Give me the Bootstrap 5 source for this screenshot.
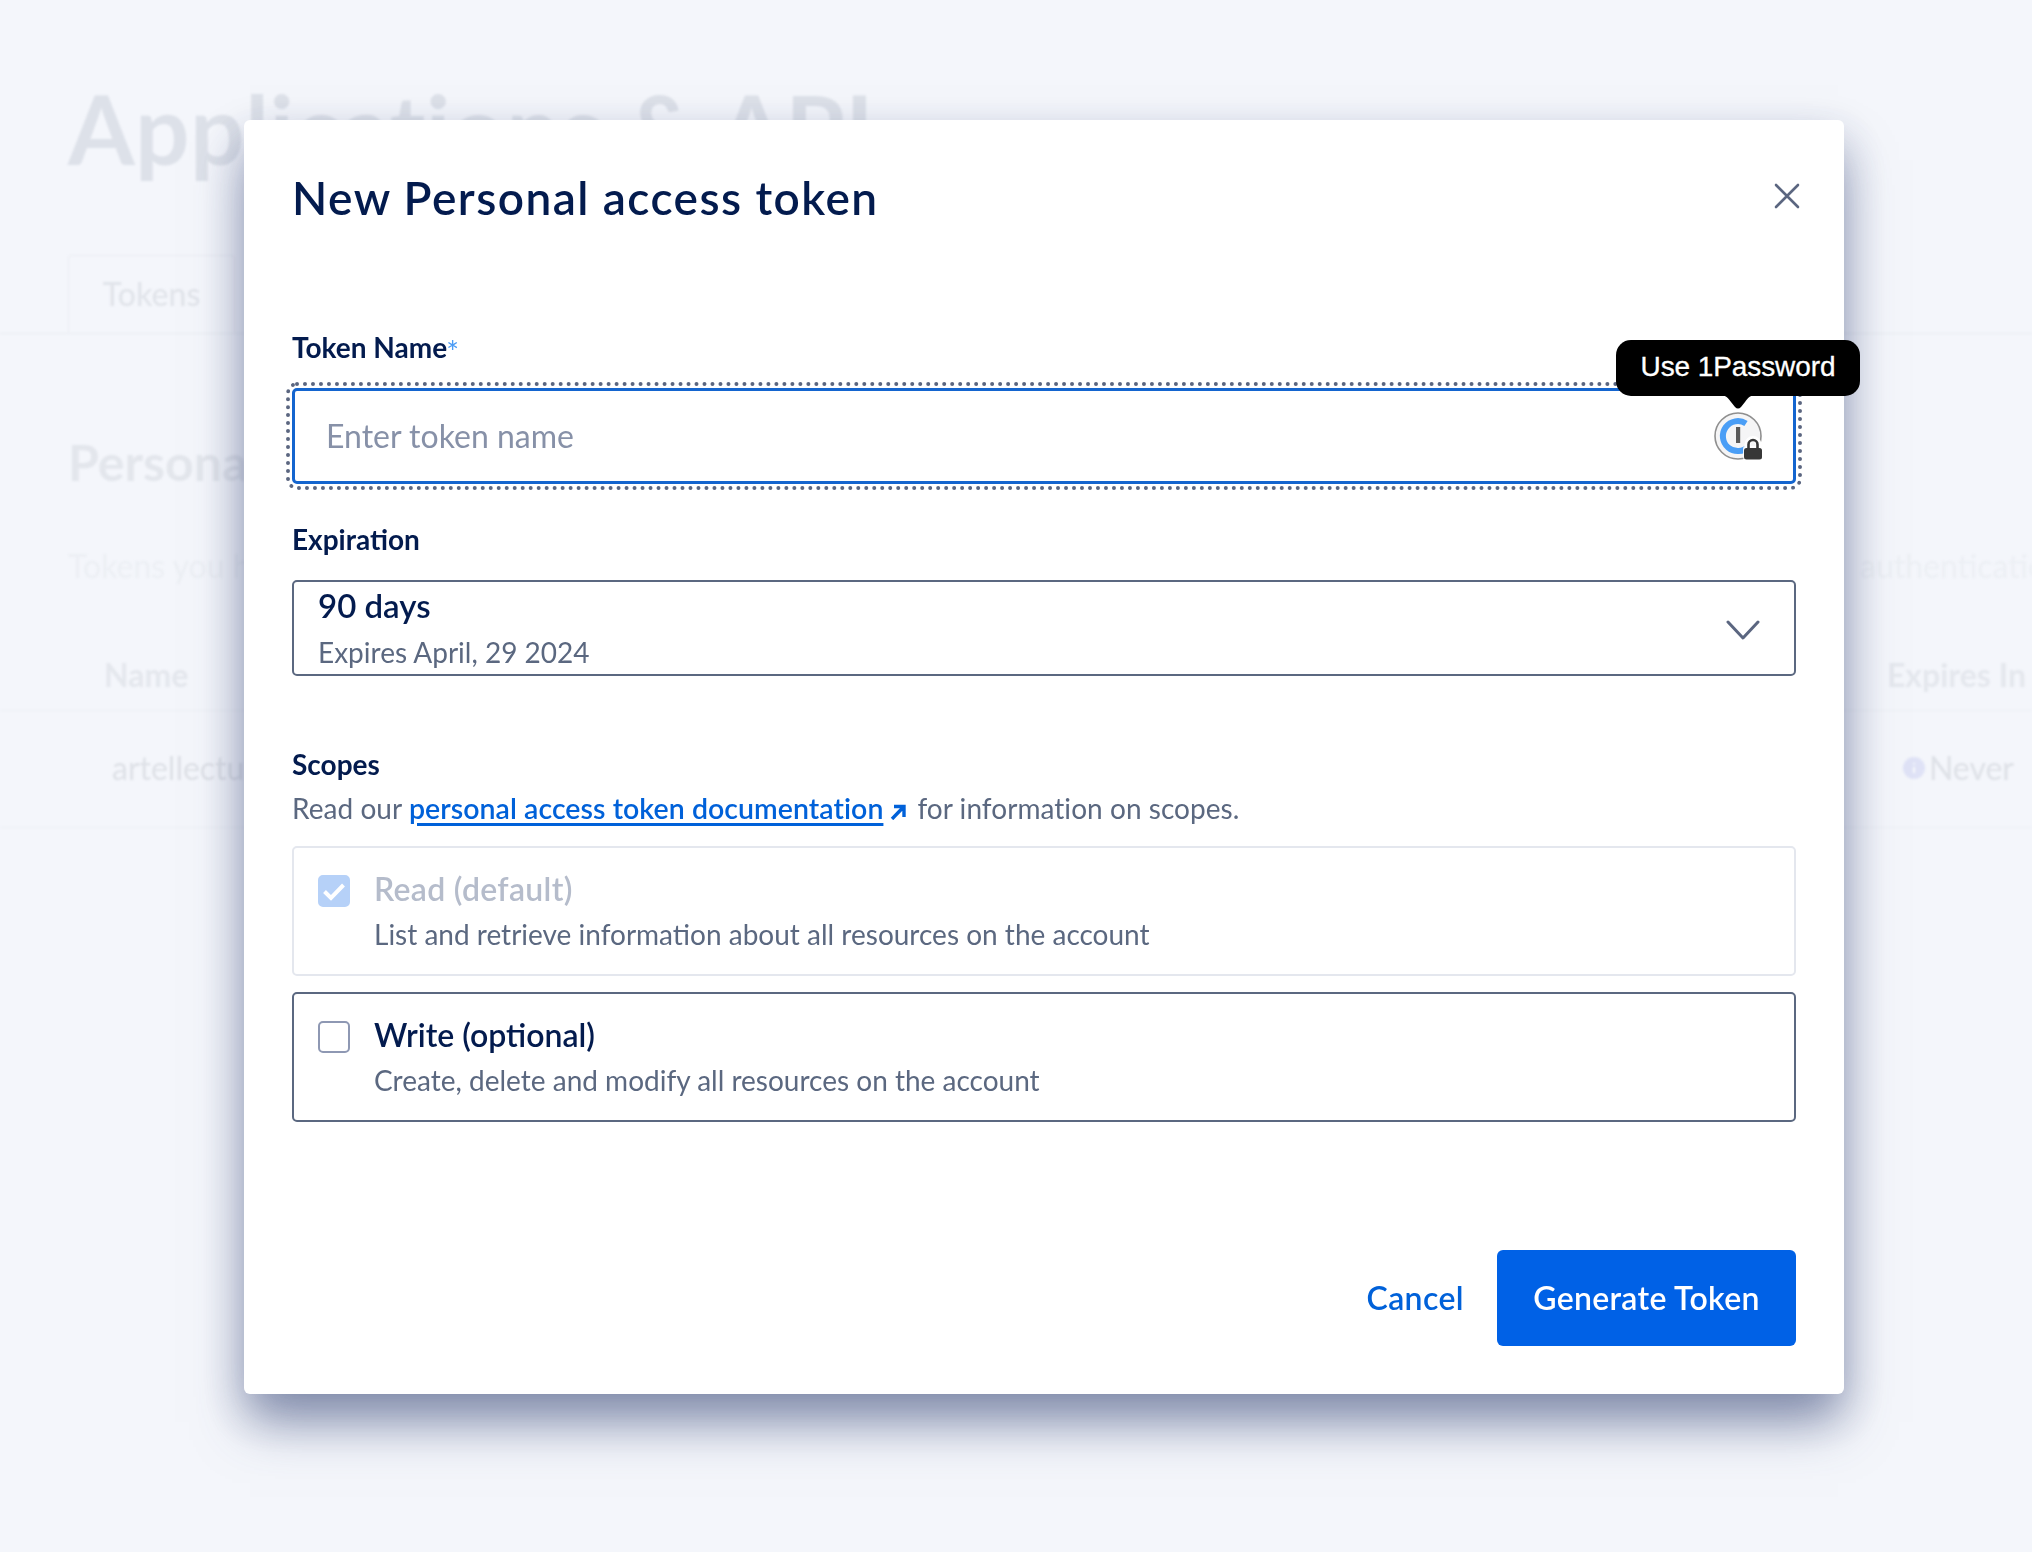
<!DOCTYPE html>
<html lang="en">
<head>
<meta charset="utf-8">
<title>New Personal access token</title>
<link rel="stylesheet" href="https://cdn.jsdelivr.net/npm/bootstrap@5.3.0/dist/css/bootstrap.min.css">
<style>
html,body{height:100%;overflow:hidden}
body{background:#f4f6fb;font-family:"Lato","Liberation Sans",sans-serif;color:#031b4e}
.page-under{height:1552px;overflow:hidden;filter:blur(1.2px);color:#dfe3ea;padding-top:78px}
.under-title{font-size:96px;font-weight:700;line-height:100px;letter-spacing:.5px;margin:0 0 77px 68px;color:#dde1e9}
.under-tabs{border-bottom:1px solid #e9ecf2;padding-left:68px;height:79px}
.under-tab{width:167px;height:79px;border:1px solid #ebedf3;border-bottom:0;border-radius:4px 4px 0 0;font-size:32px;color:#e1e4ea;font-weight:500;padding-bottom:2px}
.under-h2{font-size:50px;font-weight:700;line-height:60px;margin:98px 0 0 68px;color:#e3e6ec;white-space:nowrap}
.under-line{font-size:32px;line-height:40px;color:#eceff4;margin-top:54px;padding:0 0 0 68px;white-space:nowrap;width:2032px}
.under-line span:last-child{margin-right:-32px}
.under-head{font-size:32px;font-weight:700;color:#e4e7ed;line-height:40px;margin-top:69px;padding:0 6px 15px 104px;border-bottom:1px solid #eef0f6}
.under-row{font-size:32px;color:#dee1e7;line-height:40px;padding:37px 18px 39px 112px;border-bottom:1px solid #eef0f6}
.under-info{margin-right:4px}

.tok-dialog{max-width:1600px;margin:120px auto 0 244px}
.tok-content{border:0;border-radius:6px;height:1274px;box-shadow:0 34px 50px -6px rgba(64,80,125,.5),0 18px 44px 0 rgba(70,85,130,.32)}
.tok-header{border:0;padding:48px 48px 0;align-items:flex-start}
.tok-title{font-size:46px;line-height:60px;font-weight:600;color:#031b4e;letter-spacing:1.45px}
.tok-close{background:none;border:0;padding:0;width:26px;height:26px;margin-top:15px;margin-right:-4px;line-height:0}
.tok-body{padding:102px 48px 0;flex:1 1 auto}
.tok-label{font-size:28px;line-height:34px;font-weight:700;color:#031b4e;margin:0 0 24px}
.tok-label sup{color:#4a9bf5;font-size:30px;top:.16em;font-weight:400;line-height:0;vertical-align:baseline;margin-left:-1px}
.tok-field{height:96px;margin-bottom:38px;outline:4px dotted #5b6680;outline-offset:2px;border-radius:5px}
.tok-input{height:96px;border:3px solid #1465cf;border-radius:5px;padding:0 100px 2px 31px;font-size:32px;color:#031b4e;background:#fff;box-shadow:none}
.tok-input::placeholder{color:#8791a8;opacity:1}
.op-icon{position:absolute;left:1422px;top:24px;width:48px;height:48px}
.op-tip{position:absolute;left:1324px;top:-48px;width:244px;height:56px;background:#000;color:#fff;border-radius:15px;font:28px/54px "Liberation Sans",Arial,sans-serif;text-align:center;letter-spacing:-.1px;-webkit-text-stroke:.3px #fff}
.op-tip svg{position:absolute;left:104px;top:55px}
.tok-select{height:96px;border:2.5px solid #5b6880;border-radius:5px;background:#fff;padding:0 24px;color:#031b4e;margin-bottom:71px;text-align:left}
.tok-select:hover,.tok-select:focus{border-color:#5b6880}
.tok-chev{margin:3px 10px 0 0}
.sel-main{font-size:33px;line-height:34px;font-weight:600}
.sel-sub{font-size:28px;line-height:34px;color:#5b6880;margin-top:13px}
.tok-help{font-size:28px;line-height:34px;color:#5b6880;margin:-14px 0 21px;letter-spacing:.05px}
.tok-help a{font-size:28.5px;color:#0061d9;font-weight:600;text-decoration-thickness:2.5px;text-underline-offset:4px}
.tok-help svg{margin:0 11px 0 7px;vertical-align:-1px}
.tok-scope{height:130px;border:2.5px solid #5b6880;border-radius:5px;padding:24px 24px 0;margin-bottom:16px;gap:24px}
.tok-scope.is-off{border-color:#e4e7ee}
.tok-check.form-check-input{width:32px;height:32px;margin:3px 0 0;border:2px solid #8e98b3;border-radius:5px;flex:none}
.tok-check.form-check-input:checked{background-color:#b6d1f8;border-color:#b6d1f8;opacity:1;background-size:32px;background-image:url("data:image/svg+xml,%3Csvg xmlns='http://www.w3.org/2000/svg' viewBox='0 0 32 32'%3E%3Cpath d='M6.5 16.5l6.5 6.5 12.5-13' fill='none' stroke='%23fff' stroke-width='4'/%3E%3C/svg%3E")}
.scope-name{font-size:32px;line-height:34px;font-weight:600;color:#031b4e;margin-bottom:11px}
.is-off .scope-name{color:#b5bccb;letter-spacing:.3px}
.scope-desc{font-size:28px;line-height:34px;color:#5b6880}
.tok-foot{padding:0 48px 48px;gap:32px}
.tok-cancel{font-size:32px;font-weight:600;color:#0061d9;padding:0;text-decoration:none;letter-spacing:.4px}
.tok-primary{height:96px;width:299px;background:#0061e6;border:0;border-radius:6px;font-size:32px;font-weight:600;padding:0;letter-spacing:.3px}
</style>
</head>
<body>
<div class="page-under" aria-hidden="true">
  <h1 class="under-title">Applications &amp; API</h1>
  <div class="under-tabs d-flex">
    <div class="under-tab d-flex align-items-center justify-content-center">Tokens</div>
  </div>
  <h2 class="under-h2">Personal access tokens</h2>
  <div class="under-line d-flex justify-content-between"><span>Tokens you have generated to access the API</span><span>authentication</span></div>
  <div class="under-head d-flex justify-content-between"><span>Name</span><span>Expires In</span></div>
  <div class="under-row d-flex justify-content-between align-items-center"><span>artellectual</span><span class="d-flex align-items-center"><svg class="under-info" width="22" height="22" viewBox="0 0 22 22"><circle cx="11" cy="11" r="11" fill="#dfe2f6"/><path d="M11 6v1.5M11 10v6" stroke="#f4f6fb" stroke-width="2.4"/></svg>Never</span></div>
</div>

<div class="modal d-block" tabindex="-1">
  <div class="modal-dialog tok-dialog">
    <div class="modal-content tok-content">
      <div class="modal-header tok-header">
        <h5 class="modal-title tok-title">New Personal access token</h5>
        <button type="button" class="tok-close ms-auto" aria-label="Close">
          <svg width="26" height="26" viewBox="0 0 26 26" fill="none" stroke="#5b6680" stroke-width="2.6" stroke-linecap="round"><path d="M2 2l22 22M24 2L2 24"/></svg>
        </button>
      </div>
      <div class="modal-body tok-body">
        <label class="form-label tok-label d-block">Token Name<sup>*</sup></label>
        <div class="tok-field position-relative">
          <input type="text" class="form-control tok-input" placeholder="Enter token name">
          <svg class="op-icon" viewBox="0 0 48 48" fill="none">
            <circle cx="24" cy="24" r="23" fill="#f5f5f6" stroke="#8f8f8f" stroke-width="1.6"/>
            <path d="M32 11.5A15 15 0 1 0 34.6 34.6" stroke="#4a9ef6" stroke-width="6"/>
            <rect x="22" y="15" width="4.2" height="16" fill="#5a5a5a"/>
            <rect x="29" y="34" width="19" height="14" rx="3" fill="#fff" opacity=".9"/>
            <path d="M33.5 36v-3.5a5.5 5.5 0 0 1 11 0V36" stroke="#fff" stroke-width="6"/>
            <path d="M34.5 36v-3.5a4.5 4.5 0 0 1 9 0V36" stroke="#373737" stroke-width="2.6"/>
            <rect x="30" y="36" width="18" height="11.5" rx="2.5" fill="#373737"/>
          </svg>
          <div class="op-tip">Use 1Password<svg width="36" height="14" viewBox="0 0 36 14"><path d="M0 0h36c-6 0-8 3-11 7l-4 5c-2 2-4 2-6 0l-4-5C8 3 6 0 0 0z" fill="#000"/></svg></div>
        </div>

        <label class="form-label tok-label d-block">Expiration</label>
        <button type="button" class="btn tok-select w-100 d-flex justify-content-between align-items-center">
          <span><span class="d-block sel-main">90 days</span><span class="d-block sel-sub">Expires April, 29 2024</span></span>
          <svg width="34" height="20" viewBox="0 0 34 20" fill="none" stroke="#5b6680" stroke-width="3" stroke-linecap="round" stroke-linejoin="round" class="tok-chev"><path d="M2 2l15 16L32 2"/></svg>
        </button>

        <label class="form-label tok-label d-block">Scopes</label>
        <p class="tok-help">Read our <a href="#">personal access token documentation</a><svg width="16" height="16" viewBox="0 0 16 16" fill="none" stroke="#0061d9" stroke-width="3.4"><path d="M2 15L13.5 3M4 2.5h10V13"/></svg>for information on scopes.</p>

        <div class="form-check tok-scope is-off d-flex ps-4">
          <input class="form-check-input tok-check" type="checkbox" checked disabled>
          <div><div class="scope-name">Read (default)</div><div class="scope-desc">List and retrieve information about all resources on the account</div></div>
        </div>
        <div class="form-check tok-scope d-flex ps-4">
          <input class="form-check-input tok-check" type="checkbox">
          <div><div class="scope-name">Write (optional)</div><div class="scope-desc">Create, delete and modify all resources on the account</div></div>
        </div>
      </div>
      <div class="modal-footer tok-foot border-0 d-flex justify-content-end align-items-center">
        <button type="button" class="btn btn-link tok-cancel m-0">Cancel</button>
        <button type="button" class="btn btn-primary tok-primary m-0">Generate Token</button>
      </div>
    </div>
  </div>
</div>
<script src="https://cdn.jsdelivr.net/npm/bootstrap@5.3.0/dist/js/bootstrap.bundle.min.js"></script>
</body>
</html>
